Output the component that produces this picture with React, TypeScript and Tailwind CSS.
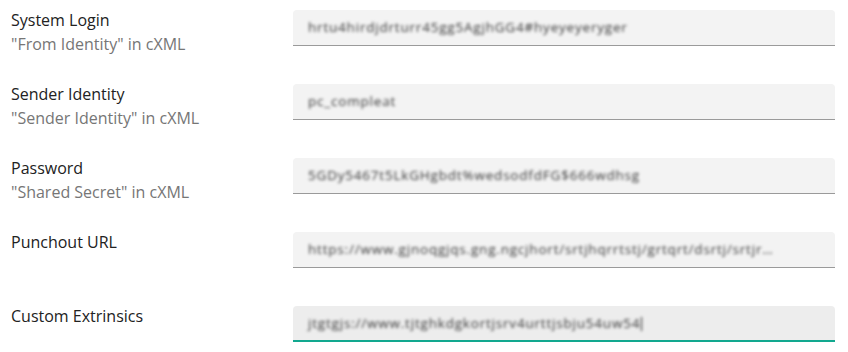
import React from 'react';

interface FieldRow {
    label: string;
    hint?: string;
    value: string;
    focused?: boolean;
}

const rows: FieldRow[] = [
    { label: 'System Login', hint: '"From Identity" in cXML', value: 'hrtu4hirdjdrturr45gg5AgjhGG4#hyeyeyeryger' },
    { label: 'Sender Identity', hint: '"Sender Identity" in cXML', value: 'pc_compleat' },
    { label: 'Password', hint: '"Shared Secret" in cXML', value: '5GDy5467t5LkGHgbdt%wedsodfdFG$666wdhsg' },
    { label: 'Punchout URL', value: 'https://www.gjnoqgjqs.gng.ngcjhort/srtjhqrrtstj/grtqrt/dsrtj/srtjr…' },
    { label: 'Custom Extrinsics', value: 'jtgtgjs://www.tjtghkdgkortjsrv4urttjsbju54uw54', focused: true }
];

export default function App() {
    return (
        <div className="w-[848px] h-[352px] bg-white pl-[11px] pt-[10px] font-['Open_Sans','Noto_Sans',sans-serif] overflow-hidden">
            {rows.map((row) => (
                <div key={row.label} className="flex h-[74px]">
                    {/* Label column */}
                    <div className="w-[282px] shrink-0">
                        <div className="text-[16px] leading-[22px] mt-[-1px] text-[#222]">{row.label}</div>
                        {row.hint && (
                            <div className="text-[16px] leading-[22px] mt-[2px] text-[#767676]">{row.hint}</div>
                        )}
                    </div>

                    {/* Input */}
                    <div
                        className={`w-[542px] h-[36px] rounded-t-[4px] flex items-center pl-[15px] pr-[16px] ${
                            row.focused
                                ? 'bg-[#ededed] border-b-2 border-[#12a88f]'
                                : 'bg-[#f3f3f3] border-b border-[#9a9a9a]'
                        }`}
                    >
                        <span className="block whitespace-nowrap text-[13.5px] tracking-[0.8px] text-[#3a3a3a] blur-[1.5px]">
                            {row.value}
                            {row.focused && <span className="inline-block w-[1px] h-[14px] bg-[#222] align-middle ml-[1px]" />}
                        </span>
                    </div>
                </div>
            ))}
        </div>
    );
}
